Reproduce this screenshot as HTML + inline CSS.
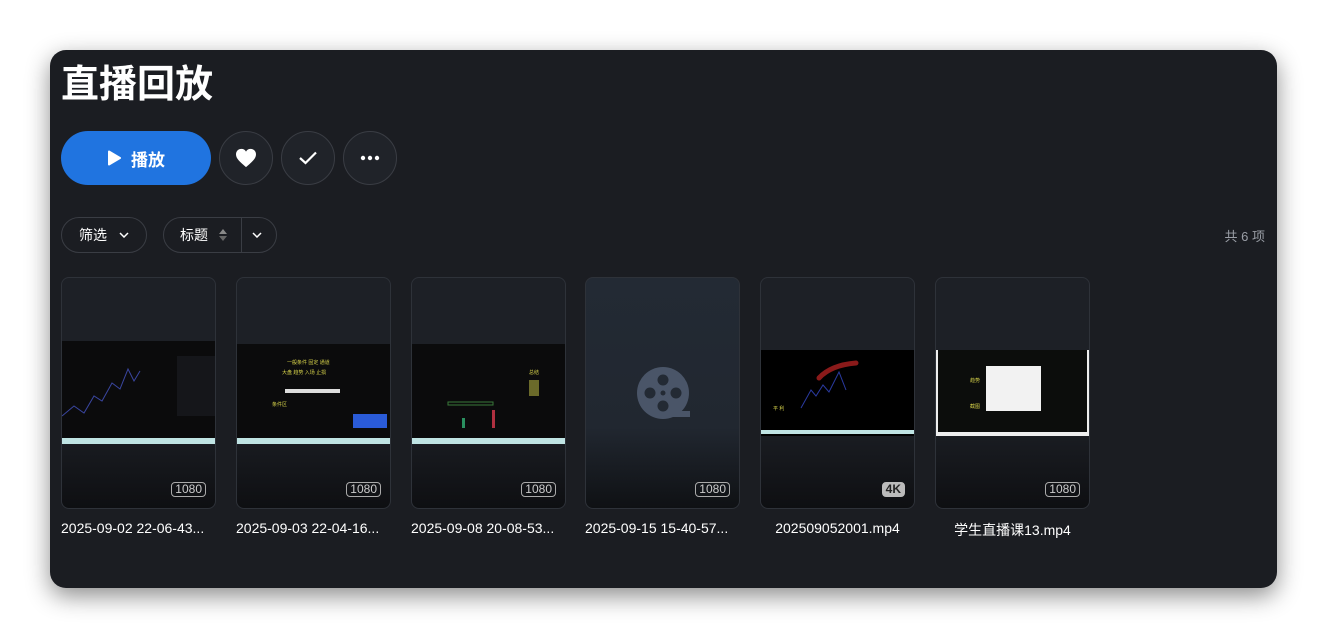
<!DOCTYPE html>
<html><head><meta charset="utf-8"><style>
*{box-sizing:border-box;margin:0;padding:0}
body{width:1327px;height:638px;background:#fff;font-family:"Liberation Sans","Noto Sans CJK SC",sans-serif;position:relative;overflow:hidden}
.panel{position:absolute;left:50px;top:50px;width:1227px;height:538px;background:#1b1d22;border-radius:16px;box-shadow:0 8px 24px rgba(0,0,0,.45)}
.abs{position:absolute}
h1{position:absolute;left:11px;top:5px;font-size:38px;line-height:60px;font-weight:bold;color:#fff;letter-spacing:0}
.play{left:11px;top:81px;width:150px;height:54px;border-radius:27px;background:#2074e0;color:#fff;font-size:17px;font-weight:bold;display:flex;align-items:center;justify-content:center;gap:10px}
.circ{top:81px;width:54px;height:54px;border-radius:50%;border:1px solid #3a3d44;background:#202329;display:flex;align-items:center;justify-content:center}
.pill{top:167px;height:36px;border:1px solid #3a3d44;border-radius:18px;color:#fff;font-size:14px;display:flex;align-items:center}
.card{top:227px;width:155px;height:232px;border-radius:8px;border:1px solid #2e3239;overflow:hidden;background:linear-gradient(#1d2026 0%,#1d2026 60%,#0e0f12 100%)}
.badge{position:absolute;right:9px;bottom:11px;font-size:12px;color:#ccc;border:1.5px solid #aaa;border-radius:4px;padding:0 3px;line-height:13px}
.lbl{top:470px;width:160px;font-size:14px;color:#fff;white-space:nowrap}
.shot{position:absolute;left:0;width:100%;background:#0b0b0c}
.bar{position:absolute;left:0;width:100%;height:6px;background:#bfe3e3}
</style></head><body>
<div class="panel">
<h1>直播回放</h1>
<div class="abs play"><svg width="14" height="16" viewBox="0 0 14 16"><path d="M2 1.5 L13 8 L2 14.5 Z" fill="#fff" stroke="#fff" stroke-linejoin="round" stroke-width="2"/></svg>播放</div>
<div class="abs circ" style="left:169px"><svg width="22" height="20" viewBox="0 0 24 22"><path d="M12 21 C5 15 1 11.5 1 7 C1 3.5 3.5 1 7 1 C9 1 11 2 12 4 C13 2 15 1 17 1 C20.5 1 23 3.5 23 7 C23 11.5 19 15 12 21Z" fill="#fff"/></svg></div>
<div class="abs circ" style="left:231px"><svg width="20" height="16" viewBox="0 0 20 16"><path d="M2 8 L7.5 13 L18 2.5" fill="none" stroke="#fff" stroke-width="2.2"/></svg></div>
<div class="abs circ" style="left:293px"><svg width="20" height="6"><circle cx="3" cy="3" r="2.2" fill="#fff"/><circle cx="10" cy="3" r="2.2" fill="#fff"/><circle cx="17" cy="3" r="2.2" fill="#fff"/></svg></div>
<div class="abs pill" style="left:11px;width:86px;padding-left:17px">筛选<svg style="margin-left:12px" width="10" height="6"><path d="M1 1 L5 5 L9 1" fill="none" stroke="#fff" stroke-width="1.5"/></svg></div>
<div class="abs pill" style="left:113px;width:114px;padding-left:16px">标题<svg style="margin-left:10px" width="10" height="14"><path d="M5 1 L9 6 H1Z" fill="#888"/><path d="M5 13 L9 8 H1Z" fill="#666"/></svg><div style="position:absolute;left:77px;top:0;width:1px;height:34px;background:#3a3d44"></div><svg style="position:absolute;left:88px" width="10" height="6"><path d="M1 1 L5 5 L9 1" fill="none" stroke="#fff" stroke-width="1.5"/></svg></div>
<div class="abs" style="right:12px;top:176px;font-size:13px;color:#9a9ea6">共 6 项</div>

<div class="abs card" style="left:11px"><div class="shot" style="top:63px;height:103px"><svg width="155" height="90"><polyline points="0,75 12,65 22,72 32,55 40,60 50,42 58,48 66,28 72,40 78,30" fill="none" stroke="#3a46a0"/><rect x="115" y="15" width="40" height="60" fill="#15161a"/></svg></div><div class="bar" style="top:160px"></div><div class="badge">1080</div></div>
<div class="abs card" style="left:186px"><div class="shot" style="top:66px;height:100px"><svg width="155" height="90"><text x="50" y="20" font-size="5" fill="#d6d24a">一般条件 固定 通道</text><text x="45" y="30" font-size="5" fill="#d6d24a">大盘 趋势 入场 止损</text><rect x="48" y="45" width="55" height="4" fill="#ddd"/><text x="35" y="62" font-size="5" fill="#d6d24a">条件区</text><rect x="116" y="70" width="34" height="14" fill="#2a5bd8"/></svg></div><div class="bar" style="top:160px"></div><div class="badge">1080</div></div>
<div class="abs card" style="left:361px"><div class="shot" style="top:66px;height:100px"><svg width="155" height="90"><text x="117" y="30" font-size="5" fill="#d6d24a">总结</text><rect x="117" y="36" width="10" height="16" fill="#6b6a2a"/><rect x="36" y="58" width="45" height="3" fill="none" stroke="#3a7a3a"/><rect x="80" y="66" width="3" height="18" fill="#b03040"/><rect x="50" y="74" width="3" height="10" fill="#2a9060"/></svg></div><div class="bar" style="top:160px"></div><div class="badge">1080</div></div>
<div class="abs card" style="left:535px;background:linear-gradient(#232a34 0%,#212730 65%,#0f1114 100%)"><svg style="position:absolute;left:51px;top:89px" width="54" height="54" viewBox="0 0 54 54"><circle cx="26" cy="26" r="26" fill="#4a5568"/><rect x="26" y="44" width="27" height="6" fill="#4a5568"/><g fill="#232a34"><circle cx="26" cy="13" r="5.5"/><circle cx="26" cy="39" r="5.5"/><circle cx="13" cy="26" r="5.5"/><circle cx="39" cy="26" r="5.5"/><circle cx="26" cy="26" r="2.5"/></g></svg><div class="badge">1080</div></div>
<div class="abs card" style="left:710px"><div class="shot" style="top:72px;height:86px;background:#000"><svg width="155" height="86"><path d="M58 28 Q70 15 95 13" fill="none" stroke="#8a1a1a" stroke-width="5" stroke-linecap="round"/><polyline points="40,58 50,40 55,46 62,35 68,42 78,22 85,40" fill="none" stroke="#2a3aa0"/><text x="12" y="60" font-size="5" fill="#d6d24a">平 利</text></svg></div><div class="bar" style="top:152px;height:4px"></div><div class="badge" style="background:#bbb;color:#222;font-weight:bold;border-color:#bbb">4K</div></div>
<div class="abs card" style="left:885px"><div class="shot" style="top:72px;height:86px;background:#0c0d0c;border-left:2px solid #eee;border-right:2px solid #eee"><svg width="150" height="86"><rect x="48" y="16" width="55" height="45" fill="#f2f2f2"/><text x="32" y="32" font-size="5" fill="#d6d24a">趋势</text><text x="32" y="58" font-size="5" fill="#d6d24a">截图</text></svg></div><div class="bar" style="top:154px;height:4px;background:#eee"></div><div class="badge">1080</div></div>

<div class="abs lbl" style="left:11px">2025-09-02 22-06-43...</div>
<div class="abs lbl" style="left:186px">2025-09-03 22-04-16...</div>
<div class="abs lbl" style="left:361px">2025-09-08 20-08-53...</div>
<div class="abs lbl" style="left:535px">2025-09-15 15-40-57...</div>
<div class="abs lbl" style="left:710px;width:155px;text-align:center">202509052001.mp4</div>
<div class="abs lbl" style="left:885px;width:155px;text-align:center">学生直播课13.mp4</div>
</div>
</body></html>
